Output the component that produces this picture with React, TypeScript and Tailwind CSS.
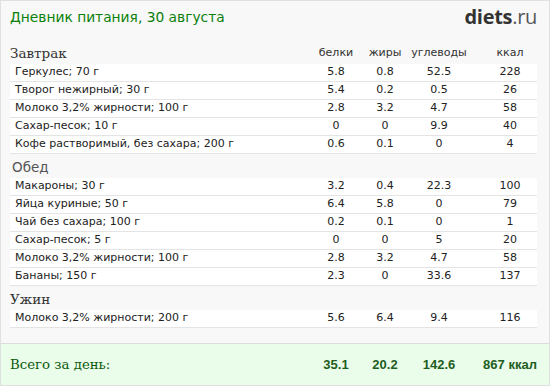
import React from 'react';

type Item = { name: string; p: string; f: string; c: string; k: string };

const breakfast: Item[] = [
  { name: 'Геркулес; 70 г', p: '5.8', f: '0.8', c: '52.5', k: '228' },
  { name: 'Творог нежирный; 30 г', p: '5.4', f: '0.2', c: '0.5', k: '26' },
  { name: 'Молоко 3,2% жирности; 100 г', p: '2.8', f: '3.2', c: '4.7', k: '58' },
  { name: 'Сахар-песок; 10 г', p: '0', f: '0', c: '9.9', k: '40' },
  { name: 'Кофе растворимый, без сахара; 200 г', p: '0.6', f: '0.1', c: '0', k: '4' },
];

const lunch: Item[] = [
  { name: 'Макароны; 30 г', p: '3.2', f: '0.4', c: '22.3', k: '100' },
  { name: 'Яйца куриные; 50 г', p: '6.4', f: '5.8', c: '0', k: '79' },
  { name: 'Чай без сахара; 100 г', p: '0.2', f: '0.1', c: '0', k: '1' },
  { name: 'Сахар-песок; 5 г', p: '0', f: '0', c: '5', k: '20' },
  { name: 'Молоко 3,2% жирности; 100 г', p: '2.8', f: '3.2', c: '4.7', k: '58' },
  { name: 'Бананы; 150 г', p: '2.3', f: '0', c: '33.6', k: '137' },
];

const dinner: Item[] = [
  { name: 'Молоко 3,2% жирности; 200 г', p: '5.6', f: '6.4', c: '9.4', k: '116' },
];

const serif = "font-['DejaVu_Serif',serif]";

const Cols = ({ p, f, c, k }: { p: React.ReactNode; f: React.ReactNode; c: React.ReactNode; k: React.ReactNode }) => (
  <>
    <div className="w-[50px] text-center">{p}</div>
    <div className="w-[48px] text-center">{f}</div>
    <div className="w-[60px] text-center">{c}</div>
    <div className="w-[68px] pl-[14px] text-center">{k}</div>
  </>
);

const Row = ({ item }: { item: Item }) => (
  <div className="h-[18px] flex items-center bg-white border-b border-[#e4e4e4] text-[11px] text-[#222]">
    <div className="flex-1 pl-[5px]">{item.name}</div>
    <Cols p={item.p} f={item.f} c={item.c} k={item.k} />
  </div>
);

const Meal = ({ title, items, sans, head }: { title: string; items: Item[]; sans?: boolean; head?: boolean }) => (
  <div>
    <div className="h-[24px] flex items-end pb-[2px]">
      <div className={`flex-1 text-[13.5px] leading-[18px] ${sans ? 'text-[#555] pl-[2px]' : `text-[#333] ${serif}`}`}>{title}</div>
      {head && (
        <div className="flex text-[11px] text-[#333] leading-[18px]">
          <Cols p="белки" f="жиры" c="углеводы" k="ккал" />
        </div>
      )}
    </div>
    {items.map((it, i) => (
      <Row key={i} item={it} />
    ))}
  </div>
);

export default function App() {
  return (
    <div className="w-[550px] h-[386px] bg-[#f8f8f8] border border-[#e0e0e0] flex flex-col font-['DejaVu_Sans',sans-serif]">
      <div className="h-[39px] flex items-center justify-between pl-[9px] pr-[12px] pb-[7px]">
        <div className="text-[13.8px] text-[#0a800a]">Дневник питания, 30 августа</div>
        <div className="font-['Open_Sans',sans-serif] text-[20px] tracking-[-0.3px] leading-none">
          <span className="font-bold text-[#333]">diets</span>
          <span className="text-[#555]">.ru</span>
        </div>
      </div>
      <div className="pl-[9px] pr-[12px]">
        <Meal title="Завтрак" items={breakfast} head />
        <Meal title="Обед" items={lunch} sans />
        <Meal title="Ужин" items={dinner} />
      </div>
      <div className="mt-auto h-[42px] bg-[#eafcea] border-t border-[#dcdcdc] flex items-center pl-[9px] pr-[12px]">
        <div className={`flex-1 text-[13.3px] text-[#0a5a0a] ${serif}`}>Всего за день:</div>
        <div className="flex font-['Liberation_Sans',sans-serif] font-bold text-[13px] text-[#1e5e1e]">
          <Cols p="35.1" f="20.2" c="142.6" k="867 ккал" />
        </div>
      </div>
    </div>
  );
}
